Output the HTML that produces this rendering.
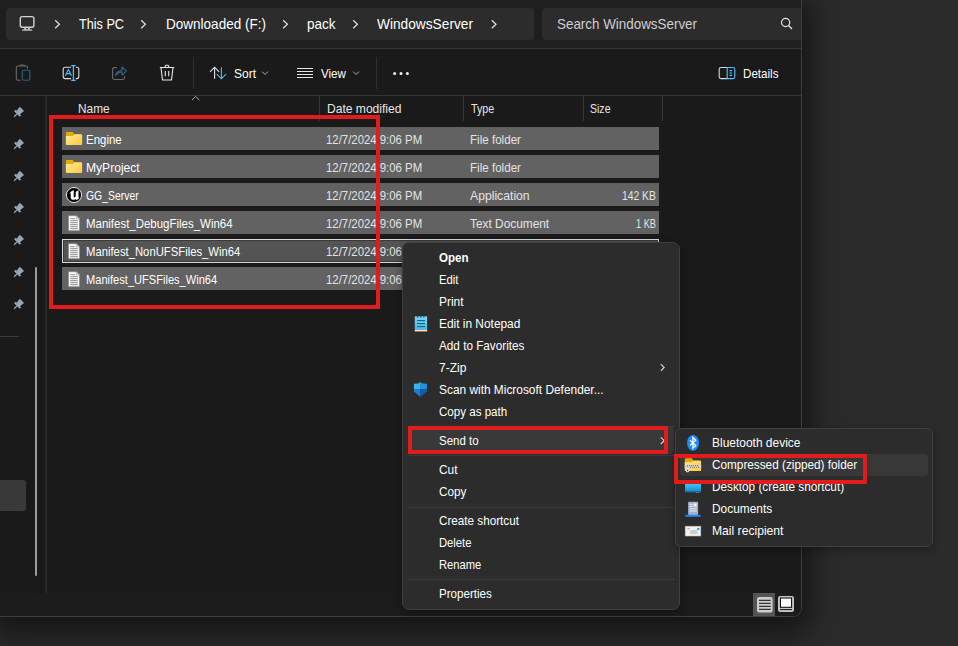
<!DOCTYPE html>
<html><head><meta charset="utf-8">
<style>
*{margin:0;padding:0;box-sizing:border-box}
html,body{width:958px;height:646px;overflow:hidden;background:#2b2b2b;font-family:"Liberation Sans",sans-serif;color:#fff}
.b{position:absolute}
.t{position:absolute;white-space:nowrap;line-height:1;transform-origin:0 0}
svg{position:absolute;overflow:visible}
</style></head><body>
<div class="b" style="left:0px;top:0px;width:802px;height:617px;background:#1a1a1a;border-bottom-right-radius:9px;box-shadow:0 8px 30px 8px rgba(0,0,0,.55)"></div>
<div class="b" style="left:0px;top:0px;width:801px;height:48px;background:#1f1f1f"></div>
<div class="b" style="left:6px;top:8px;width:528px;height:32px;background:#2c2c2c;border-radius:4px"></div>
<div class="b" style="left:542px;top:8px;width:259px;height:32px;background:#2c2c2c;border-radius:4px 0 0 4px"></div>
<div class="b" style="left:0px;top:48px;width:801px;height:1px;background:#363636"></div>
<div class="b" style="left:0px;top:95px;width:801px;height:1px;background:#363636"></div>
<div class="b" style="left:0px;top:0px;width:802px;height:617px;border-right:1px solid #3d3d3d;border-bottom:1px solid #3d3d3d;border-bottom-right-radius:9px"></div>
<div class="b" style="left:193px;top:57px;width:1px;height:32px;background:#2f2f2f"></div>
<div class="b" style="left:376px;top:57px;width:1px;height:32px;background:#2f2f2f"></div>
<div class="b" style="left:45px;top:96px;width:2px;height:497px;background:#2a2a2a"></div>
<div class="b" style="left:27px;top:96px;width:18px;height:497px;background:#191919"></div>
<div class="b" style="left:0px;top:593px;width:801px;height:23px;background:#1c1c1c;border-bottom-right-radius:8px"></div>
<div class="b" style="left:35px;top:267px;width:2px;height:309px;background:#9c9c9c;border-radius:1px"></div>
<div class="b" style="left:0px;top:336px;width:19px;height:1px;background:#3a3a3a"></div>
<div class="b" style="left:0px;top:480px;width:26px;height:31px;background:#393939;border-radius:0 3px 3px 0"></div>
<div class="b" style="left:319px;top:96px;width:1px;height:25px;background:#383838"></div>
<div class="b" style="left:463px;top:96px;width:1px;height:25px;background:#383838"></div>
<div class="b" style="left:583px;top:96px;width:1px;height:25px;background:#383838"></div>
<div class="b" style="left:662px;top:96px;width:1px;height:25px;background:#383838"></div>
<div class="t" style="left:79.00px;top:16.73px;font-size:14.5px;color:#fff;transform:scaleX(0.8724);">This PC</div>
<div class="t" style="left:165.50px;top:16.73px;font-size:14.5px;color:#fff;transform:scaleX(0.9329);">Downloaded (F:)</div>
<div class="t" style="left:307.00px;top:16.73px;font-size:14.5px;color:#fff;transform:scaleX(0.9293);">pack</div>
<div class="t" style="left:376.50px;top:16.73px;font-size:14.5px;color:#fff;transform:scaleX(0.9455);">WindowsServer</div>
<div class="t" style="left:557.00px;top:16.73px;font-size:14.5px;color:#cfcfcf;transform:scaleX(0.9242);">Search WindowsServer</div>
<div class="t" style="left:234.00px;top:67.50px;font-size:12.4px;color:#fff;transform:scaleX(0.9669);">Sort</div>
<div class="t" style="left:321.00px;top:67.50px;font-size:12.4px;color:#fff;transform:scaleX(0.9366);">View</div>
<div class="t" style="left:743.20px;top:67.50px;font-size:12.4px;color:#fff;transform:scaleX(0.9364);">Details</div>
<div class="t" style="left:78.30px;top:102.50px;font-size:12.4px;color:#e6e6e6;transform:scaleX(0.9584);">Name</div>
<div class="t" style="left:326.50px;top:102.50px;font-size:12.4px;color:#e6e6e6;transform:scaleX(0.9738);">Date modified</div>
<div class="t" style="left:470.50px;top:102.50px;font-size:12.4px;color:#e6e6e6;transform:scaleX(0.8669);">Type</div>
<div class="t" style="left:589.50px;top:102.50px;font-size:12.4px;color:#e6e6e6;transform:scaleX(0.8500);">Size</div>
<div class="b" style="left:62px;top:127px;width:597px;height:23px;background:#626262"></div>
<div class="t" style="left:86.30px;top:133.50px;font-size:12.4px;color:#fff;transform:scaleX(0.9242);">Engine</div>
<div class="t" style="left:326.30px;top:133.50px;font-size:12.4px;color:#e4e4e4;transform:scaleX(0.9181);">12/7/2024 9:06 PM</div>
<div class="t" style="left:470.30px;top:133.50px;font-size:12.4px;color:#e4e4e4;transform:scaleX(0.9369);">File folder</div>
<div class="b" style="left:62px;top:155px;width:597px;height:23px;background:#626262"></div>
<div class="t" style="left:86.30px;top:161.50px;font-size:12.4px;color:#fff;transform:scaleX(0.9743);">MyProject</div>
<div class="t" style="left:326.30px;top:161.50px;font-size:12.4px;color:#e4e4e4;transform:scaleX(0.9181);">12/7/2024 9:06 PM</div>
<div class="t" style="left:470.30px;top:161.50px;font-size:12.4px;color:#e4e4e4;transform:scaleX(0.9369);">File folder</div>
<div class="b" style="left:62px;top:183px;width:597px;height:23px;background:#626262"></div>
<div class="t" style="left:86.30px;top:189.50px;font-size:12.4px;color:#fff;transform:scaleX(0.8403);">GG_Server</div>
<div class="t" style="left:326.30px;top:189.50px;font-size:12.4px;color:#e4e4e4;transform:scaleX(0.9181);">12/7/2024 9:06 PM</div>
<div class="t" style="left:470.30px;top:189.50px;font-size:12.4px;color:#e4e4e4;transform:scaleX(0.9841);">Application</div>
<div class="t" style="left:622.00px;top:189.50px;font-size:12.4px;color:#e4e4e4;transform:scaleX(0.8335);">142 KB</div>
<div class="b" style="left:62px;top:211px;width:597px;height:23px;background:#626262"></div>
<div class="t" style="left:86.30px;top:217.50px;font-size:12.4px;color:#fff;transform:scaleX(0.9254);">Manifest_DebugFiles_Win64</div>
<div class="t" style="left:326.30px;top:217.50px;font-size:12.4px;color:#e4e4e4;transform:scaleX(0.9181);">12/7/2024 9:06 PM</div>
<div class="t" style="left:470.30px;top:217.50px;font-size:12.4px;color:#e4e4e4;transform:scaleX(0.9576);">Text Document</div>
<div class="t" style="left:636.00px;top:217.50px;font-size:12.4px;color:#e4e4e4;transform:scaleX(0.7404);">1 KB</div>
<div class="b" style="left:62px;top:239px;width:597px;height:24px;background:#545454;border:1px solid #d8d8d8;box-shadow:inset 0 0 0 1px #3a3a3a"></div>
<div class="t" style="left:86.30px;top:245.50px;font-size:12.4px;color:#fff;transform:scaleX(0.9113);">Manifest_NonUFSFiles_Win64</div>
<div class="t" style="left:326.30px;top:245.50px;font-size:12.4px;color:#e4e4e4;transform:scaleX(0.9181);">12/7/2024 9:06 PM</div>
<div class="t" style="left:470.30px;top:245.50px;font-size:12.4px;color:#e4e4e4;transform:scaleX(0.9576);">Text Document</div>
<div class="t" style="left:636.00px;top:245.50px;font-size:12.4px;color:#e4e4e4;transform:scaleX(0.7404);">1 KB</div>
<div class="b" style="left:62px;top:267px;width:597px;height:23px;background:#626262"></div>
<div class="t" style="left:86.30px;top:273.50px;font-size:12.4px;color:#fff;transform:scaleX(0.8945);">Manifest_UFSFiles_Win64</div>
<div class="t" style="left:326.30px;top:273.50px;font-size:12.4px;color:#e4e4e4;transform:scaleX(0.9181);">12/7/2024 9:06 PM</div>
<div class="t" style="left:470.30px;top:273.50px;font-size:12.4px;color:#e4e4e4;transform:scaleX(0.9576);">Text Document</div>
<div class="t" style="left:636.00px;top:273.50px;font-size:12.4px;color:#e4e4e4;transform:scaleX(0.7404);">1 KB</div>
<div class="b" style="left:49px;top:115px;width:331px;height:194px;border:4px solid #e21b1b"></div>
<div class="b" style="left:402px;top:242px;width:278px;height:368px;background:#2c2c2c;border:1px solid #3f3f3f;border-radius:7px;box-shadow:0 3px 10px rgba(0,0,0,.35)"></div>
<div class="b" style="left:407px;top:426px;width:268px;height:1px;background:#3d3d3d"></div>
<div class="b" style="left:407px;top:455px;width:268px;height:1px;background:#3d3d3d"></div>
<div class="b" style="left:407px;top:507px;width:268px;height:1px;background:#3d3d3d"></div>
<div class="b" style="left:407px;top:579px;width:268px;height:1px;background:#3d3d3d"></div>
<div class="b" style="left:408px;top:427px;width:266px;height:27px;background:#383838;border-radius:4px"></div>
<div class="t" style="left:439.30px;top:251.50px;font-size:12.4px;color:#fff;font-weight:bold;transform:scaleX(0.9343);">Open</div>
<div class="t" style="left:439.30px;top:273.50px;font-size:12.4px;color:#fff;transform:scaleX(0.9130);">Edit</div>
<div class="t" style="left:439.30px;top:295.50px;font-size:12.4px;color:#fff;transform:scaleX(0.9654);">Print</div>
<div class="t" style="left:439.30px;top:317.50px;font-size:12.4px;color:#fff;transform:scaleX(0.9601);">Edit in Notepad</div>
<div class="t" style="left:439.30px;top:339.50px;font-size:12.4px;color:#fff;transform:scaleX(0.9468);">Add to Favorites</div>
<div class="t" style="left:439.30px;top:361.50px;font-size:12.4px;color:#fff;transform:scaleX(0.9702);">7-Zip</div>
<div class="t" style="left:439.30px;top:383.50px;font-size:12.4px;color:#fff;transform:scaleX(0.9597);">Scan with Microsoft Defender...</div>
<div class="t" style="left:439.30px;top:405.50px;font-size:12.4px;color:#fff;transform:scaleX(0.9334);">Copy as path</div>
<div class="t" style="left:439.30px;top:434.50px;font-size:12.4px;color:#fff;transform:scaleX(0.9287);">Send to</div>
<div class="t" style="left:439.30px;top:463.50px;font-size:12.4px;color:#fff;transform:scaleX(0.9594);">Cut</div>
<div class="t" style="left:439.30px;top:485.50px;font-size:12.4px;color:#fff;transform:scaleX(0.9463);">Copy</div>
<div class="t" style="left:439.30px;top:514.50px;font-size:12.4px;color:#fff;transform:scaleX(0.9436);">Create shortcut</div>
<div class="t" style="left:439.30px;top:536.50px;font-size:12.4px;color:#fff;transform:scaleX(0.9069);">Delete</div>
<div class="t" style="left:439.30px;top:558.50px;font-size:12.4px;color:#fff;transform:scaleX(0.9003);">Rename</div>
<div class="t" style="left:439.30px;top:587.50px;font-size:12.4px;color:#fff;transform:scaleX(0.9361);">Properties</div>
<div class="b" style="left:674.5px;top:427.5px;width:258.5px;height:119px;background:#2c2c2c;border:1px solid #3f3f3f;border-radius:6px;box-shadow:0 3px 10px rgba(0,0,0,.3)"></div>
<div class="b" style="left:680px;top:454px;width:248px;height:22px;background:#383838;border-radius:4px"></div>
<div class="t" style="left:711.50px;top:436.50px;font-size:12.4px;color:#fff;transform:scaleX(0.9651);">Bluetooth device</div>
<div class="t" style="left:711.50px;top:458.50px;font-size:12.4px;color:#fff;transform:scaleX(0.9496);">Compressed (zipped) folder</div>
<div class="t" style="left:711.50px;top:480.50px;font-size:12.4px;color:#fff;transform:scaleX(0.9496);">Desktop (create shortcut)</div>
<div class="t" style="left:711.50px;top:502.50px;font-size:12.4px;color:#fff;transform:scaleX(0.9599);">Documents</div>
<div class="t" style="left:711.50px;top:524.50px;font-size:12.4px;color:#fff;transform:scaleX(0.9786);">Mail recipient</div>
<svg width="958" height="646" style="left:0;top:0"><defs><linearGradient id="fold" x1="0" y1="0" x2="1" y2="1"><stop offset="0" stop-color="#ffe9a0"/><stop offset="1" stop-color="#ffc93a"/></linearGradient><linearGradient id="desk" x1="0" y1="0" x2="0" y2="1"><stop offset="0" stop-color="#3cc8f2"/><stop offset="1" stop-color="#1780c9"/></linearGradient><linearGradient id="note" x1="0" y1="0" x2="0" y2="1"><stop offset="0" stop-color="#7ad8f5"/><stop offset="1" stop-color="#47b4dc"/></linearGradient></defs><rect x="20.3" y="16.6" width="13.6" height="10.6" rx="2" fill="none" stroke="#d4d4d4" stroke-width="1.4"/><path d="M24.6 27.6 H29.6 L30.4 29.4 H32.2 V30.8 H22 V29.4 H23.8 Z" fill="#bdbdbd"/><rect x="26.3" y="28" width="1.6" height="1.3" fill="#2c2c2c"/><path d="M55.2 20.2 L59.400000000000006 24.2 L55.2 28.2" fill="none" stroke="#e6e6e6" stroke-width="1.2"/><path d="M141.2 20.2 L145.39999999999998 24.2 L141.2 28.2" fill="none" stroke="#e6e6e6" stroke-width="1.2"/><path d="M283.2 20.2 L287.4 24.2 L283.2 28.2" fill="none" stroke="#e6e6e6" stroke-width="1.2"/><path d="M353.2 20.2 L357.4 24.2 L353.2 28.2" fill="none" stroke="#e6e6e6" stroke-width="1.2"/><path d="M491.8 20.2 L496.0 24.2 L491.8 28.2" fill="none" stroke="#e6e6e6" stroke-width="1.2"/><circle cx="785.6" cy="22.5" r="4.1" fill="none" stroke="#e8e8e8" stroke-width="1.2"/><path d="M788.6 25.5 L792 29" stroke="#e8e8e8" stroke-width="1.3"/><path d="M27.5 68.5 V67.5 Q27.5 66 26 66 H17.8 Q16.3 66 16.3 67.5 V78.8 Q16.3 80.3 17.8 80.3 H20.5" fill="none" stroke="#6a6a6a" stroke-width="1.1"/><path d="M19.8 66.2 Q19.8 65 21 65 H23.5 Q24.7 65 24.7 66.2" fill="none" stroke="#6a6a6a" stroke-width="1.1"/><rect x="22.3" y="70.3" width="7.6" height="10" rx="1.5" fill="none" stroke="#2a6286" stroke-width="1.1"/><path d="M71 67.3 H65.2 Q63.2 67.3 63.2 69.3 V76.6 Q63.2 78.6 65.2 78.6 H71 M75.8 67.3 H76.8 Q78.8 67.3 78.8 69.3 V76.6 Q78.8 78.6 76.8 78.6 H75.8" fill="none" stroke="#dcdcdc" stroke-width="1.1"/><path d="M73.4 65.6 V80.4 M71.2 65.6 H75.6 M71.2 80.4 H75.6" fill="none" stroke="#4cc2ff" stroke-width="1.2"/><path d="M65.3 75.8 L68.4 69.4 L71.5 75.8 M66.5 73.6 H70.3" fill="none" stroke="#4cc2ff" stroke-width="1.1"/><path d="M117 67.6 H114.5 Q112.6 67.6 112.6 69.5 V77.6 Q112.6 79.5 114.5 79.5 H122.8 Q124.7 79.5 124.7 77.6 V76" fill="none" stroke="#6a6a6a" stroke-width="1.1"/><path d="M115.6 75.6 C116.2 72.6 118.4 70.6 122 70.4 V67 L126.4 71.1 L122 75.2 V72 C119.4 72 117.2 73.2 115.6 75.6 Z" fill="none" stroke="#306b92" stroke-width="1.05" stroke-linejoin="round"/><path d="M159.8 67.5 H174.2 M161 67.5 L162.5 80 H171.5 L173 67.5 M165.3 71 V76.3 M168.7 71 V76.3 M165.2 67.3 V66.3 Q165.2 65.3 166.2 65.3 H167.8 Q168.8 65.3 168.8 66.3 V67.3" fill="none" stroke="#e8e8e8" stroke-width="1.1"/><path d="M214.6 67.2 V78.8 M210 71.8 L214.6 67.2 L219.2 71.8" fill="none" stroke="#e6e6e6" stroke-width="1.1"/><path d="M221.4 67.2 V78.8 M216.8 74.2 L221.4 78.8 L226 74.2" fill="none" stroke="#4cc2ff" stroke-width="1.1"/><path d="M262.2 71.6 L265.09999999999997 74.5 L268.0 71.6" fill="none" stroke="#b4b4b4" stroke-width="1"/><path d="M353.2 71.6 L356.09999999999997 74.5 L359.0 71.6" fill="none" stroke="#b4b4b4" stroke-width="1"/><path d="M297 68.5 H313" stroke="#e6e6e6" stroke-width="1"/><path d="M297 71.5 H313" stroke="#e6e6e6" stroke-width="1"/><path d="M297 74.5 H313" stroke="#e6e6e6" stroke-width="1"/><path d="M297 77.5 H313" stroke="#e6e6e6" stroke-width="1"/><circle cx="394.6" cy="73.6" r="1.5" fill="#f0f0f0"/><circle cx="401" cy="73.6" r="1.5" fill="#f0f0f0"/><circle cx="407.4" cy="73.6" r="1.5" fill="#f0f0f0"/><path d="M727 67.5 H721 Q719.2 67.5 719.2 69.3 V76.8 Q719.2 78.6 721 78.6 H727" fill="none" stroke="#d8d8d8" stroke-width="1.1"/><path d="M727.2 67.5 H733 Q734.8 67.5 734.8 69.3 V76.8 Q734.8 78.6 733 78.6 H727.2 Z M729.5 70.6 H732 M729.5 73 H732 M729.5 75.4 H732" fill="none" stroke="#4cc2ff" stroke-width="1.1"/><path d="M192 100 L195.6 96.4 L199.3 100" fill="none" stroke="#ababab" stroke-width="1"/><g transform="translate(18.41 112.49) rotate(45)"><path d="M-3 -5 H3 L2.4 0.1 H4 V2.1 H-4 V0.1 H-2.4 Z" fill="#9ba6ae"/><path d="M0 2 V6" stroke="#9ba6ae" stroke-width="1.3"/></g><g transform="translate(18.41 144.49) rotate(45)"><path d="M-3 -5 H3 L2.4 0.1 H4 V2.1 H-4 V0.1 H-2.4 Z" fill="#9ba6ae"/><path d="M0 2 V6" stroke="#9ba6ae" stroke-width="1.3"/></g><g transform="translate(18.41 176.49) rotate(45)"><path d="M-3 -5 H3 L2.4 0.1 H4 V2.1 H-4 V0.1 H-2.4 Z" fill="#9ba6ae"/><path d="M0 2 V6" stroke="#9ba6ae" stroke-width="1.3"/></g><g transform="translate(18.41 208.49) rotate(45)"><path d="M-3 -5 H3 L2.4 0.1 H4 V2.1 H-4 V0.1 H-2.4 Z" fill="#9ba6ae"/><path d="M0 2 V6" stroke="#9ba6ae" stroke-width="1.3"/></g><g transform="translate(18.41 240.49) rotate(45)"><path d="M-3 -5 H3 L2.4 0.1 H4 V2.1 H-4 V0.1 H-2.4 Z" fill="#9ba6ae"/><path d="M0 2 V6" stroke="#9ba6ae" stroke-width="1.3"/></g><g transform="translate(18.41 272.49) rotate(45)"><path d="M-3 -5 H3 L2.4 0.1 H4 V2.1 H-4 V0.1 H-2.4 Z" fill="#9ba6ae"/><path d="M0 2 V6" stroke="#9ba6ae" stroke-width="1.3"/></g><g transform="translate(18.41 304.49) rotate(45)"><path d="M-3 -5 H3 L2.4 0.1 H4 V2.1 H-4 V0.1 H-2.4 Z" fill="#9ba6ae"/><path d="M0 2 V6" stroke="#9ba6ae" stroke-width="1.3"/></g><g transform="translate(65.9 131.9)"><path d="M0 1.2 Q0 0 1.2 0 H6.8 L8.2 2.2 H15 Q16.2 2.2 16.2 3.4 V11.8 Q16.2 13 15 13 H1.2 Q0 13 0 11.8 Z" fill="#e9a900"/><path d="M0 4.2 H7 L8.5 2.6 H15 Q16.2 2.6 16.2 3.8 V11.8 Q16.2 13 15 13 H1.2 Q0 13 0 11.8 Z" fill="url(#fold)"/></g><g transform="translate(65.9 159.9)"><path d="M0 1.2 Q0 0 1.2 0 H6.8 L8.2 2.2 H15 Q16.2 2.2 16.2 3.4 V11.8 Q16.2 13 15 13 H1.2 Q0 13 0 11.8 Z" fill="#e9a900"/><path d="M0 4.2 H7 L8.5 2.6 H15 Q16.2 2.6 16.2 3.8 V11.8 Q16.2 13 15 13 H1.2 Q0 13 0 11.8 Z" fill="url(#fold)"/></g><circle cx="74" cy="195" r="7.6" fill="#000" stroke="#e0e0e0" stroke-width="1"/><path d="M69.8 193.4 Q70.9 190.9 73.7 190.4 L73.5 196.6 Q73.6 197.9 74.8 197.3 L75.9 196.5 V191.9 L78.3 190.6 V197.4 L79.1 198 Q77.8 199.8 76 199.7 V198.7 Q74.4 199.9 72.7 199.8 Q70.9 199.6 70.9 197.6 V192.8 Z" fill="#fff" stroke="#fff" stroke-width="0.35"/><g transform="translate(68 215.2)"><path d="M0.5 0.5 H8.2 L11.5 3.8 V15.5 H0.5 Z" fill="#fafafa" stroke="#8a8a8a" stroke-width="0.8"/><path d="M8.2 0.5 V3.8 H11.5" fill="#dcdcdc" stroke="#9a9a9a" stroke-width="0.6"/><path d="M2.2 3.5 H6.8" stroke="#8c8c8c" stroke-width="1"/><path d="M2.2 5.5 H9.8" stroke="#8c8c8c" stroke-width="1"/><path d="M2.2 7.5 H9.8" stroke="#8c8c8c" stroke-width="1"/><path d="M2.2 9.5 H9.8" stroke="#8c8c8c" stroke-width="1"/><path d="M2.2 11.5 H9.8" stroke="#8c8c8c" stroke-width="1"/><path d="M2.2 13.5 H9.8" stroke="#8c8c8c" stroke-width="1"/></g><g transform="translate(68 243.2)"><path d="M0.5 0.5 H8.2 L11.5 3.8 V15.5 H0.5 Z" fill="#fafafa" stroke="#8a8a8a" stroke-width="0.8"/><path d="M8.2 0.5 V3.8 H11.5" fill="#dcdcdc" stroke="#9a9a9a" stroke-width="0.6"/><path d="M2.2 3.5 H6.8" stroke="#8c8c8c" stroke-width="1"/><path d="M2.2 5.5 H9.8" stroke="#8c8c8c" stroke-width="1"/><path d="M2.2 7.5 H9.8" stroke="#8c8c8c" stroke-width="1"/><path d="M2.2 9.5 H9.8" stroke="#8c8c8c" stroke-width="1"/><path d="M2.2 11.5 H9.8" stroke="#8c8c8c" stroke-width="1"/><path d="M2.2 13.5 H9.8" stroke="#8c8c8c" stroke-width="1"/></g><g transform="translate(68 271.2)"><path d="M0.5 0.5 H8.2 L11.5 3.8 V15.5 H0.5 Z" fill="#fafafa" stroke="#8a8a8a" stroke-width="0.8"/><path d="M8.2 0.5 V3.8 H11.5" fill="#dcdcdc" stroke="#9a9a9a" stroke-width="0.6"/><path d="M2.2 3.5 H6.8" stroke="#8c8c8c" stroke-width="1"/><path d="M2.2 5.5 H9.8" stroke="#8c8c8c" stroke-width="1"/><path d="M2.2 7.5 H9.8" stroke="#8c8c8c" stroke-width="1"/><path d="M2.2 9.5 H9.8" stroke="#8c8c8c" stroke-width="1"/><path d="M2.2 11.5 H9.8" stroke="#8c8c8c" stroke-width="1"/><path d="M2.2 13.5 H9.8" stroke="#8c8c8c" stroke-width="1"/></g><rect x="414.8" y="316.3" width="12.3" height="15.4" fill="url(#note)"/><path d="M414.8 330.6 H427.1" stroke="#f2f2f2" stroke-width="1"/><path d="M414.8 331.5 H427.1" stroke="#c0651a" stroke-width="1"/><circle cx="417.6" cy="316.9" r="0.8" fill="#06607f"/><circle cx="420.8" cy="316.9" r="0.8" fill="#06607f"/><circle cx="423.9" cy="316.9" r="0.8" fill="#06607f"/><path d="M417 320.6 H425" stroke="#0a6485" stroke-width="1.1"/><path d="M417 323.6 H425" stroke="#0a6485" stroke-width="1.1"/><path d="M417 326.6 H425" stroke="#0a6485" stroke-width="1.1"/><path d="M420.4 382 L422.5 383.6 L426.9 383.8 V389.3 H420.4 Z" fill="#1f93e6"/><path d="M420.4 382 L418.3 383.6 L413.9 383.8 V389.3 H420.4 Z" fill="#35b6f2"/><path d="M413.9 389.3 H420.4 V397 L413.9 391.5 Z" fill="#1a7fe3"/><path d="M426.9 389.3 H420.4 V397 L426.9 391.5 Z" fill="#0f5fb7"/><path d="M660.8 364.2 L664.2 367.5 L660.8 370.8" fill="none" stroke="#d8d8d8" stroke-width="1.1"/><path d="M660.8 437.4 L664.2 440.7 L660.8 444.0" fill="none" stroke="#d8d8d8" stroke-width="1.1"/><ellipse cx="693" cy="442.9" rx="6" ry="8" fill="#1a8cff"/><path d="M690 440.3 L695.8 445.6 L692.9 448.3 V437.5 L695.8 440.2 L690 445.5" fill="none" stroke="#fff" stroke-width="1.2"/><g transform="translate(684.8 458.2)"><path d="M0 1.2 Q0 0 1.2 0 H7 L8.4 2.2 H15.1 Q16.3 2.2 16.3 3.4 V11.7 Q16.3 12.9 15.1 12.9 H1.2 Q0 12.9 0 11.7 Z" fill="#e9a900"/><path d="M0 4 H7 L8.5 2.6 H15.1 Q16.3 2.6 16.3 3.8 V11.7 Q16.3 12.9 15.1 12.9 H1.2 Q0 12.9 0 11.7 Z" fill="url(#fold)"/><rect x="0" y="6.7" width="16.3" height="3" fill="#cfcfcf"/><rect x="1.2" y="6.3" width="3" height="7.8" rx="0.8" fill="#d8d8d8"/><circle cx="2.7" cy="7.8" r="0.6" fill="#333"/><circle cx="2.7" cy="12.2" r="0.6" fill="#5a4a10"/></g><circle cx="689.6" cy="465.6" r="0.55" fill="#6b5a10"/><circle cx="690.6" cy="467.3" r="0.55" fill="#6b5a10"/><circle cx="691.6" cy="465.6" r="0.55" fill="#6b5a10"/><circle cx="692.6" cy="467.3" r="0.55" fill="#6b5a10"/><circle cx="693.6" cy="465.6" r="0.55" fill="#6b5a10"/><circle cx="694.6" cy="467.3" r="0.55" fill="#6b5a10"/><circle cx="695.6" cy="465.6" r="0.55" fill="#6b5a10"/><circle cx="696.6" cy="467.3" r="0.55" fill="#6b5a10"/><circle cx="697.6" cy="465.6" r="0.55" fill="#6b5a10"/><circle cx="698.6" cy="467.3" r="0.55" fill="#6b5a10"/><rect x="685" y="484" width="16" height="8.4" fill="url(#desk)"/><path d="M685 492 H701" stroke="#11466e" stroke-width="0.9"/><circle cx="696.5" cy="492.4" r="0.45" fill="#ddd"/><circle cx="698.5" cy="492.4" r="0.45" fill="#ddd"/><rect x="688.1" y="501.8" width="10" height="13.2" rx="1" fill="#9fb2c8"/><path d="M689.6 504.3 H692.6 M689.6 506.4 H692.6 M689.6 508.8 H696.7 M689.6 511 H696.7" stroke="#f4f6f8" stroke-width="0.9"/><rect x="693.6" y="503.4" width="3" height="3.2" fill="#f4f6f8"/><path d="M685.5 515.8 H700.5" stroke="#1a8cff" stroke-width="2"/><rect x="685.2" y="526.2" width="15.6" height="9.8" fill="#f2f2f2" stroke="#bdbdbd" stroke-width="0.6"/><rect x="697.3" y="528" width="2" height="2" fill="#1a8cff"/><path d="M687.3 528.7 H690 M690.2 531 H697.5 M690.2 533 H697.5" stroke="#888" stroke-width="0.7"/><rect x="753" y="593" width="22" height="23" fill="#555"/><rect x="757" y="597" width="15.6" height="15.6" rx="2" fill="#cdcdcd"/><path d="M759 600.3 H770.7" stroke="#111" stroke-width="1"/><path d="M759 603.3 H770.7" stroke="#111" stroke-width="1"/><path d="M759 606.3 H770.7" stroke="#111" stroke-width="1"/><path d="M759 609.3 H770.7" stroke="#111" stroke-width="1"/><rect x="778" y="595.9" width="16" height="16.1" rx="2.2" fill="#c6c6c6"/><rect x="780.4" y="598" width="11.2" height="9.3" fill="#fff" stroke="#000" stroke-width="1"/><path d="M780 609.6 H792" stroke="#111" stroke-width="1"/></svg>
<div class="b" style="left:408px;top:426px;width:260px;height:28px;border:4px solid #e21b1b"></div>
<div class="b" style="left:674px;top:454px;width:193px;height:30px;border:4px solid #e21b1b"></div>
</body></html>
